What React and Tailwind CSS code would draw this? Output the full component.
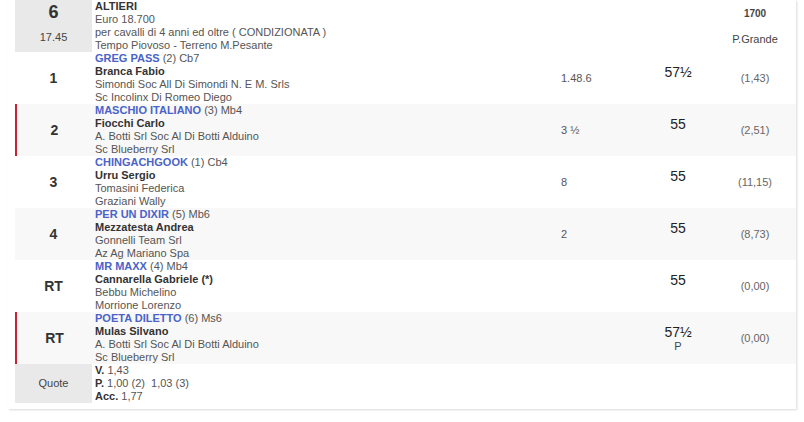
import React from 'react';

const RUNNERS = [
  { pos: '1', name: 'GREG PASS', extra: '(2) Cb7', jockey: 'Branca Fabio', trainer: 'Simondi Soc All Di Simondi N. E M. Srls', owner: 'Sc Incolinx Di Romeo Diego', time: '1.48.6', weight: '57½', sub: '', odds: '(1,43)', flag: false },
  { pos: '2', name: 'MASCHIO ITALIANO', extra: '(3) Mb4', jockey: 'Fiocchi Carlo', trainer: 'A. Botti Srl Soc Al Di Botti Alduino', owner: 'Sc Blueberry Srl', time: '3 ½', weight: '55', sub: '', odds: '(2,51)', flag: true },
  { pos: '3', name: 'CHINGACHGOOK', extra: '(1) Cb4', jockey: 'Urru Sergio', trainer: 'Tomasini Federica', owner: 'Graziani Wally', time: '8', weight: '55', sub: '', odds: '(11,15)', flag: false },
  { pos: '4', name: 'PER UN DIXIR', extra: '(5) Mb6', jockey: 'Mezzatesta Andrea', trainer: 'Gonnelli Team Srl', owner: 'Az Ag Mariano Spa', time: '2', weight: '55', sub: '', odds: '(8,73)', flag: false },
  { pos: 'RT', name: 'MR MAXX', extra: '(4) Mb4', jockey: 'Cannarella Gabriele (*)', trainer: 'Bebbu Michelino', owner: 'Morrione Lorenzo', time: '', weight: '55', sub: '', odds: '(0,00)', flag: false },
  { pos: 'RT', name: 'POETA DILETTO', extra: '(6) Ms6', jockey: 'Mulas Silvano', trainer: 'A. Botti Srl Soc Al Di Botti Alduino', owner: 'Sc Blueberry Srl', time: '', weight: '57½', sub: 'P', odds: '(0,00)', flag: true },
];

function RunnerRow({ r, odd }) {
  return (
    <div className={`flex h-[52px] ${odd ? 'bg-[#f8f8f8]' : 'bg-white'}`}>
      <div className={`w-[77px] flex items-center justify-center text-[14px] font-bold text-[#333] ${r.flag ? 'border-l-2 border-[#c82333]' : ''}`}>
        {r.pos}
      </div>
      <div className="w-[463px] pl-[3px] leading-[13px] text-[11px] text-[#555]">
        <div>
          <span className="font-bold text-[#4a63c8]">{r.name}</span> {r.extra}
        </div>
        <div className="font-bold text-[#333]">{r.jockey}</div>
        <div>{r.trainer}</div>
        <div>{r.owner}</div>
      </div>
      <div className="w-[75px] pl-[6px] flex items-center text-[11px] text-[#555]">{r.time}</div>
      <div className="w-[96px] flex flex-col items-center justify-center text-center">
        <div className="text-[14px] leading-[16px] text-[#222]">{r.weight}</div>
        <div className="text-[11px] leading-[13px] h-[13px] text-[#444]">{r.sub}</div>
      </div>
      <div className="w-[58px] flex items-center justify-center text-[11px] text-[#666]">{r.odds}</div>
      <div className="w-[10px]" />
    </div>
  );
}

export default function App() {
  return (
    <div className="w-[804px] h-[422px] bg-white font-['Liberation_Sans',Arial,sans-serif]">
      <div className="ml-[8px] w-[788px] pl-[7px] pb-[6px] bg-white shadow-[1px_1px_2px_rgba(0,0,0,0.15)]">
        {/* race header */}
        <div className="flex h-[52px] bg-white">
          <div className="w-[77px] bg-[#e9e9e9] flex flex-col items-center pt-[2px]">
            <div className="text-[18px] leading-[20px] font-bold text-[#333]">6</div>
            <div className="mt-[9px] text-[11px] leading-[13px] text-[#444]">17.45</div>
          </div>
          <div className="w-[463px] pl-[3px] leading-[13px] text-[11px] text-[#555]">
            <div className="font-bold text-[#333]">ALTIERI</div>
            <div>Euro 18.700</div>
            <div>per cavalli di 4 anni ed oltre ( CONDIZIONATA )</div>
            <div>Tempo Piovoso - Terreno M.Pesante</div>
          </div>
          <div className="w-[75px]" />
          <div className="w-[96px]" />
          <div className="w-[58px] flex flex-col items-center justify-center text-[11px] leading-[13px] text-[#444]">
            <div className="font-bold text-[10px]">1700</div>
            <div>&nbsp;</div>
            <div>P.Grande</div>
          </div>
          <div className="w-[10px]" />
        </div>

        {RUNNERS.map((r, i) => (
          <RunnerRow key={r.name} r={r} odd={i % 2 === 1} />
        ))}

        {/* quote */}
        <div className="flex h-[39px] bg-white">
          <div className="w-[77px] bg-[#e9e9e9] flex items-center justify-center text-[11px] text-[#444]">Quote</div>
          <div className="pl-[3px] leading-[13px] text-[11px] text-[#555]">
            <div><span className="font-bold text-[#333]">V.</span> 1,43</div>
            <div><span className="font-bold text-[#333]">P.</span> 1,00 (2)&nbsp; 1,03 (3)</div>
            <div><span className="font-bold text-[#333]">Acc.</span> 1,77</div>
          </div>
        </div>
      </div>
    </div>
  );
}
